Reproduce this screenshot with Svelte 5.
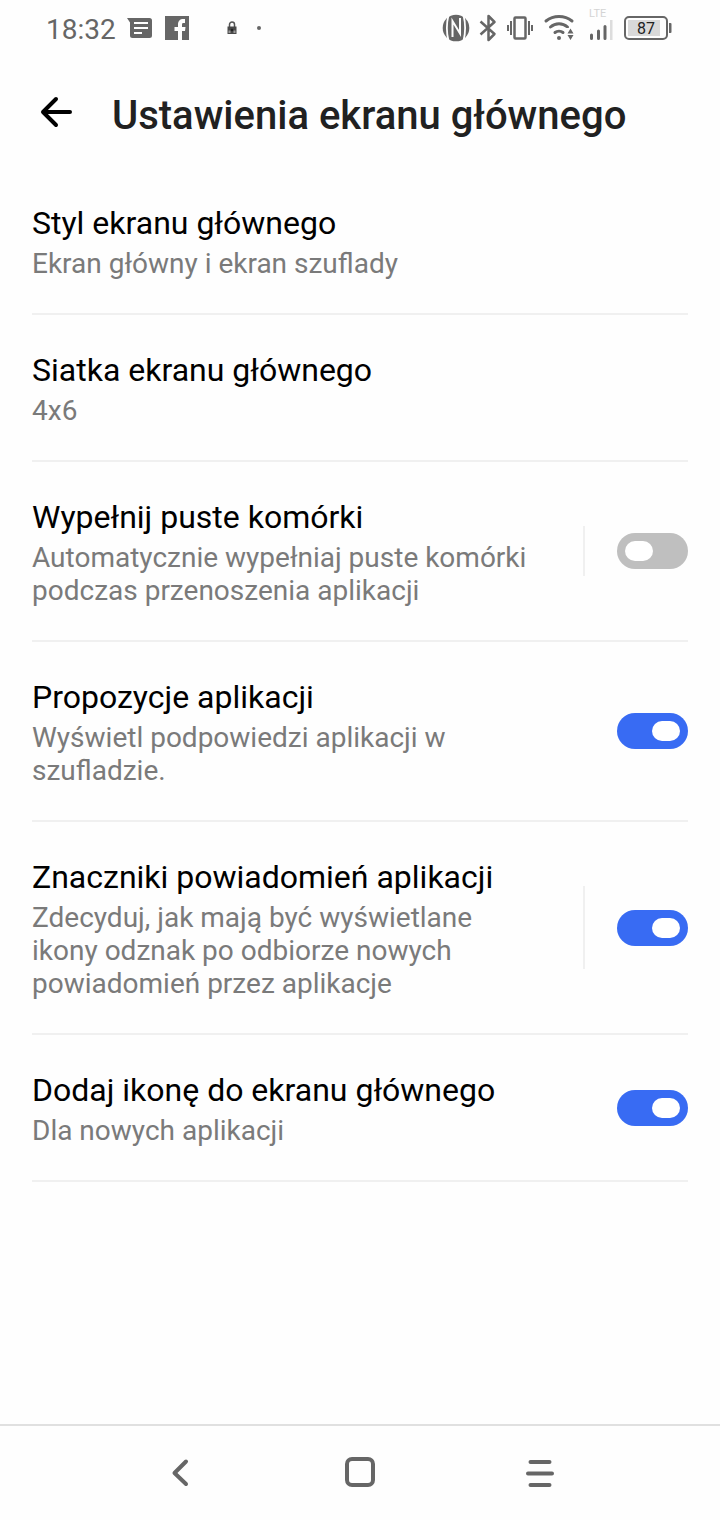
<script>
  let items = $state([
    { id: 'styl', title: 'Styl ekranu głównego', text: 'Ekran główny i ekran szuflady' },
    { id: 'siatka', title: 'Siatka ekranu głównego', text: '4x6' },
    { id: 'wypelnij', title: 'Wypełnij puste komórki', text: 'Automatycznie wypełniaj puste komórki podczas przenoszenia aplikacji', toggle: true, on: false, split: true },
    { id: 'propozycje', title: 'Propozycje aplikacji', text: 'Wyświetl podpowiedzi aplikacji w szufladzie.', toggle: true, on: true },
    { id: 'znaczniki', title: 'Znaczniki powiadomień aplikacji', text: 'Zdecyduj, jak mają być wyświetlane ikony odznak po odbiorze nowych powiadomień przez aplikacje', toggle: true, on: true, split: true },
    { id: 'dodaj', title: 'Dodaj ikonę do ekranu głównego', text: 'Dla nowych aplikacji', toggle: true, on: true }
  ]);
</script>

<div class="screen">
  <div class="status">
    <div class="group left">
      <span class="clock">18:32</span>
      <svg width="27" height="22" viewBox="0 0 27 22" aria-hidden="true">
        <path fill="#666" d="M0 1h22.500a2.500 2.500 0 0 1 2.500 2.500v15a2.500 2.500 0 0 1-2.500 2.500h-17a2.500 2.500 0 0 1-2.500-2.500V5.500z" />
        <path stroke="#fff" stroke-width="2" d="M7 6h14M7 11h14M7 16h8" />
      </svg>
      <svg width="24" height="24" viewBox="0 0 24 24" aria-hidden="true">
        <path fill="#666" d="M0 0h24v24H0z" />
        <path fill="#fff" d="M13 24v-9H9.500v-4H13V8.500C13 5 15 3 18.300 3H20v4h-1.500c-1.200 0-1.500.6-1.500 2v2h3.500l-.5 4H17v9z" />
      </svg>
      <svg class="lock" width="10" height="14" viewBox="0 0 10 14" aria-hidden="true">
        <path fill="none" stroke="#555" stroke-width="1.500" d="M2.500 6V3.500a2.500 2.500 0 0 1 5 0V6" />
        <path fill="#4a4a4a" d="M.5 5.500h9v7.500h-9z" />
        <path fill="#999" d="M1.500 9.500h2v2.500h-2zM6.500 9.500h2v2.500h-2z" />
        <circle cx="5" cy="9" r="1.300" fill="#222" />
      </svg>
      <span class="dot"></span>
    </div>
    <div class="group right">
      <svg width="28" height="28" viewBox="0 0 28 28" aria-hidden="true">
        <circle cx="14" cy="14" r="13.300" fill="#666" />
        <path fill="none" stroke="#fefefe" stroke-width="1.800" d="M6.500 1C4.500 9 4.500 19 6.500 27M21.500 1c2 8 2 18 0 26" />
        <path fill="none" stroke="#fefefe" stroke-width="2" d="M10.500 23V7l7.500 12.500V4" />
      </svg>
      <svg width="18" height="28" viewBox="0 0 18 28" aria-hidden="true">
        <path fill="none" stroke="#666" stroke-width="2.500" stroke-linejoin="round" d="M1.500 7.500l14 12.500-6 6V2l6 6-14 12.500" />
      </svg>
      <svg width="28" height="24" viewBox="0 0 28 24" aria-hidden="true">
        <rect x="8.500" y="1.500" width="11" height="21" rx="1" fill="none" stroke="#666" stroke-width="2.500" />
        <path stroke="#666" stroke-width="2" d="M2 9v6M5 5v14M23 5v14M26 9v6" />
      </svg>
      <svg width="32" height="28" viewBox="0 0 32 28" aria-hidden="true">
        <g fill="none" stroke="#666" stroke-width="3" stroke-linecap="round">
          <path d="M3 7C10.500 1 21.500 1 29 7" />
          <path d="M7.500 13c5-4.500 12-4.500 17 0" />
          <path d="M12 18.500c2.300-1.800 5.700-1.800 8 0" />
        </g>
        <circle cx="16" cy="24" r="2" fill="#666" />
        <path fill="#fefefe" d="M23 14h9v14h-9z" />
        <path fill="#666" d="M27.500 14.500l3 5h-6zM27.500 26l-3-5h6z" />
      </svg>
      <div class="signal">
        <span>LTE</span>
        <svg width="24" height="20" viewBox="0 0 24 20" aria-hidden="true">
          <path stroke="#666" stroke-width="3" stroke-linecap="round" d="M2.500 15v3.500M9.500 11v7.500M16 6.500v12" />
          <path fill="#ddd" d="M21 0h2.500v20H21z" />
        </svg>
      </div>
      <div class="battery">
        <svg width="48" height="24" viewBox="0 0 48 24" aria-hidden="true">
          <rect x="1" y="1" width="42" height="22" rx="4" fill="#fefefe" stroke="#666" stroke-width="2" />
          <path fill="#d9d9d9" d="M4 4h32v16H4z" />
          <path fill="#666" d="M45 7h1.500a1 1 0 0 1 1 1v8a1 1 0 0 1-1 1H45z" />
        </svg>
        <span>87</span>
      </div>
    </div>
  </div>

  <header>
    <button class="back" aria-label="Wstecz">
      <svg width="32" height="32" viewBox="0 0 32 32" aria-hidden="true">
        <path fill="none" stroke="#000" stroke-width="4" stroke-linecap="round" stroke-linejoin="round" d="M16 3L3 16l13 13M3 16h27" />
      </svg>
    </button>
    <h1>Ustawienia ekranu głównego</h1>
  </header>

  <main>
    {#each items as item (item.id)}
      <section class="row">
        <div class="copy">
          {#if item.toggle}
            <label class="title" for={item.id}>{item.title}</label>
          {:else}
            <h2 class="title">{item.title}</h2>
          {/if}
          <p>{item.text}</p>
        </div>
        {#if item.toggle}
          <div class="control" class:split={item.split}>
            <input id={item.id} type="checkbox" role="switch" bind:checked={item.on} />
          </div>
        {/if}
      </section>
    {/each}
  </main>

  <nav>
    <button aria-label="Cofnij">
      <svg width="32" height="32" viewBox="0 0 32 32" aria-hidden="true">
        <path fill="none" stroke="#666" stroke-width="4" stroke-linecap="round" stroke-linejoin="round" d="M22 4.500L10.500 16 22 27" />
      </svg>
    </button>
    <button aria-label="Ekran główny">
      <svg width="32" height="32" viewBox="0 0 32 32" aria-hidden="true">
        <rect x="3" y="2" width="26" height="26" rx="5" fill="none" stroke="#666" stroke-width="4" />
      </svg>
    </button>
    <button aria-label="Ostatnie aplikacje">
      <svg width="32" height="32" viewBox="0 0 32 32" aria-hidden="true">
        <path stroke="#666" stroke-width="4" stroke-linecap="round" d="M6.500 5h19M4 16.500h24M6.500 28h19" />
      </svg>
    </button>
  </nav>
</div>

<style>
  :global(body) {
    margin: 0;
    background: #fefefe;
  }
  .screen {
    min-height: 100vh;
    display: flex;
    flex-direction: column;
    font-family: Roboto, "Noto Sans", sans-serif;
    color: #000;
  }
  svg {
    display: block;
    flex: none;
  }
  button {
    border: 0;
    padding: 0;
    background: none;
    display: flex;
    align-items: center;
    justify-content: center;
    cursor: pointer;
  }
  .status {
    height: 56px;
    padding: 0 48px 0 46px;
    display: flex;
    justify-content: space-between;
    align-items: center;
    color: #666;
  }
  .group {
    display: flex;
    align-items: center;
  }
  .left {
    gap: 11px;
  }
  .right {
    gap: 9px;
  }
  .clock {
    font-size: 28px;
    line-height: 32px;
    padding-top: 4px;
  }
  .lock {
    margin-left: 27px;
  }
  .dot {
    width: 4px;
    height: 4px;
    margin-left: 9px;
    border-radius: 50%;
    background: #666;
  }
  .signal {
    margin: 0 2px 0 5px;
    display: flex;
    flex-direction: column;
    padding-bottom: 8px;
  }
  .signal span {
    font-size: 11px;
    line-height: 12px;
    color: #d4d4d4;
  }
  .battery {
    position: relative;
  }
  .battery span {
    position: absolute;
    inset: 0 4px 0 0;
    text-align: center;
    font-size: 16px;
    line-height: 25px;
    color: #222;
  }
  header {
    height: 112px;
    padding: 0 32px;
    display: flex;
    align-items: center;
    gap: 32px;
  }
  .back {
    width: 48px;
    height: 48px;
  }
  h1 {
    margin: 0;
    padding-top: 8px;
    font-size: 40px;
    line-height: 48px;
    font-weight: 500;
    color: #212121;
  }
  main {
    flex: 1;
    padding: 0 32px;
  }
  .row {
    display: flex;
    gap: 48px;
    border-bottom: 2px solid #f0f0f0;
  }
  .copy {
    flex: 1;
    padding: 36px 0 33px;
  }
  .title {
    display: block;
    margin: 0 0 5px;
    font-size: 32px;
    line-height: 38px;
    font-weight: 400;
  }
  p {
    margin: 0;
    font-size: 28px;
    line-height: 33px;
    color: #7a7a7a;
  }
  .control {
    display: flex;
    align-items: center;
    padding-left: 32px;
    border-left: 2px solid transparent;
  }
  .control.split {
    margin: 64px 0;
    border-color: #f0f0f0;
  }
  input {
    appearance: none;
    flex: none;
    display: flex;
    width: 71px;
    height: 36px;
    margin: 0;
    padding: 8px;
    box-sizing: border-box;
    border-radius: 18px;
    background: #bfbfbf;
    cursor: pointer;
  }
  input::before {
    content: "";
    width: 28px;
    height: 20px;
    border-radius: 10px;
    background: #fff;
  }
  input:checked {
    justify-content: flex-end;
    background: #386bf3;
  }
  nav {
    height: 94px;
    padding: 0 12.5%;
    border-top: 2px solid #e0e0e0;
    display: grid;
    grid-template-columns: repeat(3, 1fr);
  }
</style>
